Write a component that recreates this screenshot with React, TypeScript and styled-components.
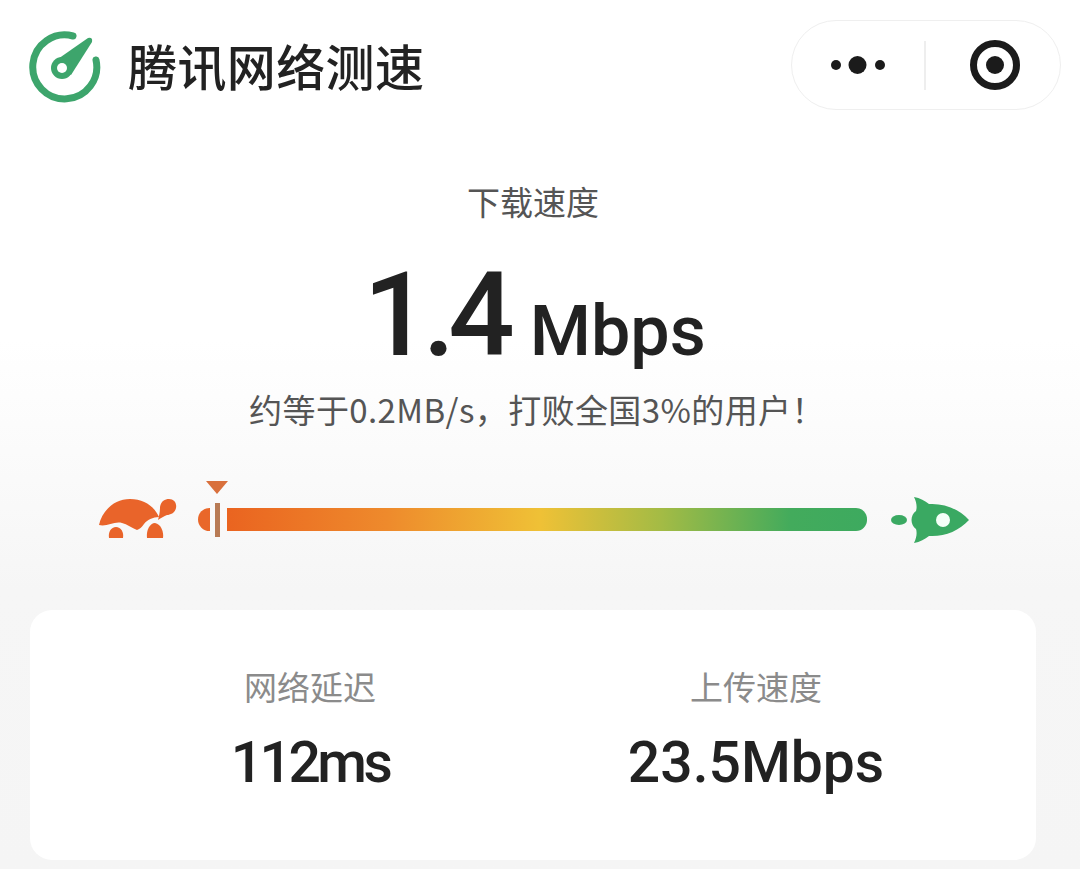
import React from "react";
import styled, { createGlobalStyle } from "styled-components";

const Global = createGlobalStyle`
  html, body { margin: 0; padding: 0; background: #fff; }
  body { font-family: "Noto Sans CJK SC", "Noto Sans", sans-serif; }
`;
const Page = styled.div`
  width: 1080px; height: 869px; overflow: hidden; display: flex; flex-direction: column;
  background: linear-gradient(180deg, #ffffff 0px, #ffffff 340px, #f6f6f6 590px, #f5f5f5 869px);
`;
const Header = styled.header`
  height: 132px; flex: none; display: flex; align-items: flex-start; justify-content: space-between;
  padding: 20px 19px 0 27px; box-sizing: border-box;
`;
const Brand = styled.div`display: flex; align-items: center; gap: 27px; height: 95px;`;
const Title = styled.h1`
  margin: 0 0 6px; font-size: 49px; line-height: 60px; font-weight: 500; color: #222; letter-spacing: 0.4px;
`;
const Capsule = styled.div`
  width: 270px; height: 90px; box-sizing: border-box; border: 1.5px solid #efefef; border-radius: 45px;
  display: flex; align-items: center; background: #fff;
`;
const MoreCell = styled.div`
  width: 132px; flex: none; display: flex; align-items: center; justify-content: center; height: 100%;
`;
const CloseCell = styled.div`
  flex: 1; display: flex; align-items: center; justify-content: center; height: 100%;
  padding-left: 5px; box-sizing: border-box;
`;
const Divider = styled.div`width: 1.5px; height: 49px; background: #eeeeee; flex: none;`;
const Hero = styled.section`display: flex; flex-direction: column; align-items: center; flex: none;`;
const HeroLabel = styled.div`font-size: 33px; line-height: 44px; color: #555; margin: 47px 14px 0 0;`;
const Speed = styled.div`
  display: flex; align-items: baseline; justify-content: center; gap: 22px; color: #222; height: 116px;
  margin: 34px 11px 0 0; font-family: Roboto, "Noto Sans", sans-serif;
`;
const SpeedValue = styled.span`font-size: 117px; line-height: 116px; font-weight: 500; letter-spacing: -7px;`;
const SpeedUnit = styled.span`font-size: 70px; line-height: 116px; font-weight: 500;`;
const Note = styled.div`
  font-size: 33px; line-height: 44px; color: #555; margin: 14px 6px 0 0; letter-spacing: 0.4px;
`;
const MeterRow = styled.section`
  display: flex; align-items: flex-start; height: 60px; margin-top: 49px; padding-left: 98px; flex: none;
`;
const Turtle = styled.svg`margin-top: 17px; flex: none;`;
const MarkerWrap = styled.div`position: relative; width: 29px; height: 60px; margin-left: 20px; flex: none;`;
const MarkerCap = styled.div`
  position: absolute; left: 0; top: 28px; width: 12px; height: 23px;
  background: #e9672a; border-radius: 12px 0 0 12px;
`;
const MarkerLine = styled.div`
  position: absolute; left: 17px; top: 23px; width: 5px; height: 34px; background: #b87b55;
`;
const Pointer = styled.svg`position: absolute; left: 8px; top: 1px;`;
const Bar = styled.div`
  width: 640px; height: 23px; margin-top: 28px; border-radius: 0 11px 11px 0; flex: none;
  background: linear-gradient(90deg, #ea6420 0%, #ee8a2c 25%, #efc136 49%, #a3bb45 68%, #43ab5c 88%, #3daa5f 100%);
`;
const Rocket = styled.svg`margin: 17px 0 0 24px; flex: none;`;
const Card = styled.section`
  margin: 70px 44px 0 30px; height: 250px; background: #fff; border-radius: 22px; flex: none;
  display: grid; grid-template-columns: 446px 446px; padding-left: 57px; box-sizing: border-box;
`;
const Stat = styled.div`
  display: flex; flex-direction: column; align-items: center; padding-top: 53px;
`;
const StatLabel = styled.div`font-size: 33px; line-height: 46px; color: #8b8b8b;`;
const StatValue = styled.div<{ $tracking: number }>`
  font-family: Roboto, "Noto Sans", sans-serif; font-size: 57px; line-height: 64px; color: #222; font-weight: 500;
  margin-top: 22px; letter-spacing: ${(p) => p.$tracking}px;
`;

const Logo = () => (
  <svg width="74" height="74" viewBox="0 0 74 74" fill="none">
    <path d="M46 5 A32 32 0 1 0 69 29" stroke="#3da56c" strokeWidth="7" strokeLinecap="round" />
    <path d="M28 30 L61 7 Q66 6 65 11 L44 44 Z" fill="#3da56c" />
    <circle cx="35" cy="37" r="11" fill="#3da56c" />
    <circle cx="35" cy="37" r="5" fill="#fff" />
  </svg>
);
const Dots = () => (
  <svg width="56" height="20" viewBox="0 0 56 20">
    <circle cx="6" cy="10" r="5" fill="#1b1b1b" />
    <circle cx="27.5" cy="10" r="9" fill="#1b1b1b" />
    <circle cx="50" cy="10" r="5" fill="#1b1b1b" />
  </svg>
);
const Target = () => (
  <svg width="52" height="52" viewBox="0 0 52 52">
    <circle cx="26" cy="26" r="21.5" fill="none" stroke="#1b1b1b" strokeWidth="7" />
    <circle cx="26" cy="26" r="9" fill="#1b1b1b" />
  </svg>
);

export default function App() {
  return (
    <Page>
      <Global />
      <Header>
        <Brand>
          <Logo />
          <Title>腾讯网络测速</Title>
        </Brand>
        <Capsule>
          <MoreCell><Dots /></MoreCell>
          <Divider />
          <CloseCell><Target /></CloseCell>
        </Capsule>
      </Header>
      <Hero>
        <HeroLabel>下载速度</HeroLabel>
        <Speed>
          <SpeedValue>1.4</SpeedValue>
          <SpeedUnit>Mbps</SpeedUnit>
        </Speed>
        <Note>约等于0.2MB/s，打败全国3%的用户！</Note>
      </Hero>
      <MeterRow>
        <Turtle width="80" height="42" viewBox="0 0 80 42">
          <path d="M1 28 C4 14 16 2 32 2 C46 2 56 9 61 20 C55 20 49 23 46 27 C44 30 42 32 39 33 C34 31 29 27 24 26 C16 24 9 30 1 28 Z" fill="#e9642a" />
          <path d="M60 23 C61 19 62 16 62 10 C63 4 67 2 71 2 C76 2 79 6 78 11 C77 16 72 18 69 18 C66 19 63 21 60 23 Z" fill="#e9642a" />
          <path d="M11 41 C10 35 13 30 18 30 C23 30 26 35 25 41 Z" fill="#e9642a" />
          <path d="M49 41 C48 33 52 26 57 26 C63 27 66 35 65 41 Z" fill="#e9642a" />
        </Turtle>
        <MarkerWrap>
          <MarkerCap />
          <MarkerLine />
          <Pointer width="22" height="14" viewBox="0 0 22 14"><path d="M0 0 H22 L11 13 Z" fill="#d9703c" /></Pointer>
        </MarkerWrap>
        <Bar />
        <Rocket width="80" height="46" viewBox="0 0 80 46">
          <ellipse cx="8" cy="23" rx="8" ry="5" fill="#3aa962" />
          <path d="M23 0 C29 1 34 4 38 7 C53 6 68 12 78 23 C68 34 53 40 38 39 C34 42 29 45 23 46 C26 40 26 35 25 32 C19 28 19 18 25 14 C26 11 26 6 23 0 Z" fill="#3aa962" />
          <circle cx="52" cy="23" r="7" fill="#f4fff7" />
        </Rocket>
      </MeterRow>
      <Card>
        <Stat>
          <StatLabel>网络延迟</StatLabel>
          <StatValue $tracking={-3.5}>112ms</StatValue>
        </Stat>
        <Stat>
          <StatLabel>上传速度</StatLabel>
          <StatValue $tracking={0}>23.5Mbps</StatValue>
        </Stat>
      </Card>
    </Page>
  );
}
